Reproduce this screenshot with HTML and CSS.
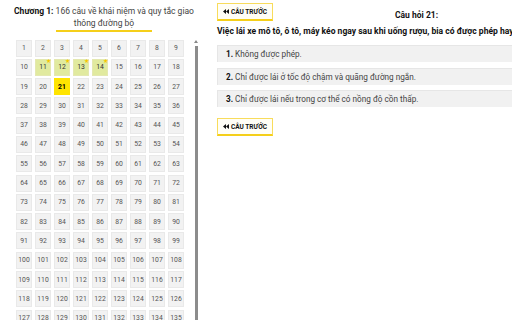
FILE: index.html
```html
<!DOCTYPE html>
<html lang="vi">
<head>
    <meta charset="UTF-8">
    <title>Ôn thi lý thuyết</title>
    <link rel="stylesheet" href="styles.css">
</head>
<body>
    <div class="page">
        <div class="sidebar">
            <div class="chapter-title"><b>Chương 1:</b> 166 câu về khái niệm và quy tắc giao thông đường bộ</div>
            <div class="title-line"></div>
            <div class="grid-wrap">
                <div class="grid" id="grid"></div>
                <div class="scroll-track">
                    <div class="scroll-arrow"></div>
                    <div class="scroll-thumb"></div>
                </div>
            </div>
        </div>

        <div class="main">
            <div class="main-head">
                <button class="btn-prev"><svg width="6" height="5" viewBox="0 0 6 5"><path d="M3 0 L0 2.5 L3 5 Z M6 0 L3 2.5 L6 5 Z" fill="#111"/></svg>CÂU TRƯỚC</button>
                <div class="question-no">Câu hỏi 21:</div>
            </div>
            <div class="question">Việc lái xe mô tô, ô tô, máy kéo ngay sau khi uống rượu, bia có được phép hay không?</div>
            <div class="answers">
                <div class="answer"><b>1.</b> Không được phép.</div>
                <div class="answer"><b>2.</b> Chỉ được lái ở tốc độ chậm và quãng đường ngắn.</div>
                <div class="answer"><b>3.</b> Chỉ được lái nếu trong cơ thể có nồng độ cồn thấp.</div>
            </div>
            <button class="btn-prev"><svg width="6" height="5" viewBox="0 0 6 5"><path d="M3 0 L0 2.5 L3 5 Z M6 0 L3 2.5 L6 5 Z" fill="#111"/></svg>CÂU TRƯỚC</button>
        </div>
    </div>

    <script>
        const grid = document.getElementById('grid');
        const starred = [11, 12, 13, 14];
        const current = 21;

        for (let i = 1; i <= 166; i++) {
            const cell = document.createElement('div');
            cell.className = 'cell';
            cell.textContent = i;
            if (starred.includes(i)) {
                cell.classList.add('marked');
                const star = document.createElement('span');
                star.className = 'star';
                star.textContent = '★';
                cell.appendChild(star);
            }
            if (i === current) cell.classList.add('active');
            grid.appendChild(cell);
        }
    </script>
</body>
</html>
```

FILE: styles.css
```css
* {
    box-sizing: border-box;
    margin: 0;
    padding: 0;
}

body {
    background: #fff;
    font-family: Roboto, 'Liberation Sans', sans-serif;
    color: #333;
    overflow: hidden;
}

.page {
    display: flex;
    padding-left: 8px;
}

/* Sidebar */
.sidebar {
    width: 192px;
    flex-shrink: 0;
}

.chapter-title {
    margin-top: 5px;
    font-size: 8.5px;
    line-height: 12px;
    text-align: center;
    color: #444;
}

.chapter-title b {
    color: #111;
}

.title-line {
    width: 96px;
    height: 1.5px;
    margin: 1px auto 0;
    background: #f5cf1a;
}

.grid-wrap {
    display: flex;
    margin-top: 8px;
    padding-left: 8px;
}

.grid {
    display: grid;
    grid-template-columns: repeat(9, 16px);
    grid-auto-rows: 17px;
    column-gap: 3px;
    row-gap: 2.3px;
}

.cell {
    position: relative;
    display: flex;
    align-items: center;
    justify-content: center;
    background: #f2f2f2;
    border: 1px solid #e9e9e9;
    font-size: 6.8px;
    color: #555;
}

.cell.marked {
    background: #e1ea9f;
    border-color: #e4e8b0;
    color: #333;
}

.cell.active {
    background: #ffe400;
    border-color: #ffe400;
    color: #000;
    font-weight: bold;
}

.star {
    position: absolute;
    top: -2px;
    right: -1px;
    font-size: 6px;
    line-height: 6px;
    color: #f7c600;
}

.scroll-track {
    display: flex;
    flex-direction: column;
    align-items: center;
    width: 4px;
    margin-left: 10px;
}

.scroll-arrow {
    width: 0;
    height: 0;
    border-left: 2px solid transparent;
    border-right: 2px solid transparent;
    border-bottom: 3px solid #888;
}

.scroll-thumb {
    width: 3px;
    height: 300px;
    margin-top: 3px;
    background: #8c8c8c;
}

/* Main */
.main {
    width: 430px;
    flex-shrink: 0;
    margin-left: 17px;
    padding-top: 3px;
}

.main-head {
    display: flex;
    align-items: flex-start;
}

.btn-prev {
    display: flex;
    align-items: center;
    justify-content: center;
    gap: 2px;
    width: 56px;
    height: 18px;
    background: #fffef6;
    border: 1px solid #f8dc5c;
    border-bottom: 2px solid #f5cf1a;
    font-family: Roboto, 'Liberation Sans', sans-serif;
    font-size: 6.5px;
    font-weight: bold;
    color: #111;
}

.question-no {
    margin-left: 122px;
    margin-top: 7px;
    font-size: 8.5px;
    font-weight: bold;
    color: #111;
}

.question {
    margin-top: 4px;
    font-size: 8.55px;
    line-height: 12px;
    font-weight: bold;
    color: #111;
    white-space: nowrap;
}

.answers {
    margin-top: 8px;
}

.answer {
    height: 17px;
    margin-bottom: 5.5px;
    padding-left: 8px;
    background: #f1f1f1;
    border-top: 1px solid #e6e6e6;
    border-left: 1px solid #e6e6e6;
    font-size: 8.2px;
    line-height: 16px;
    color: #444;
}

.answer b {
    color: #111;
}

.answers + .btn-prev {
    margin-top: 11px;
}
```
